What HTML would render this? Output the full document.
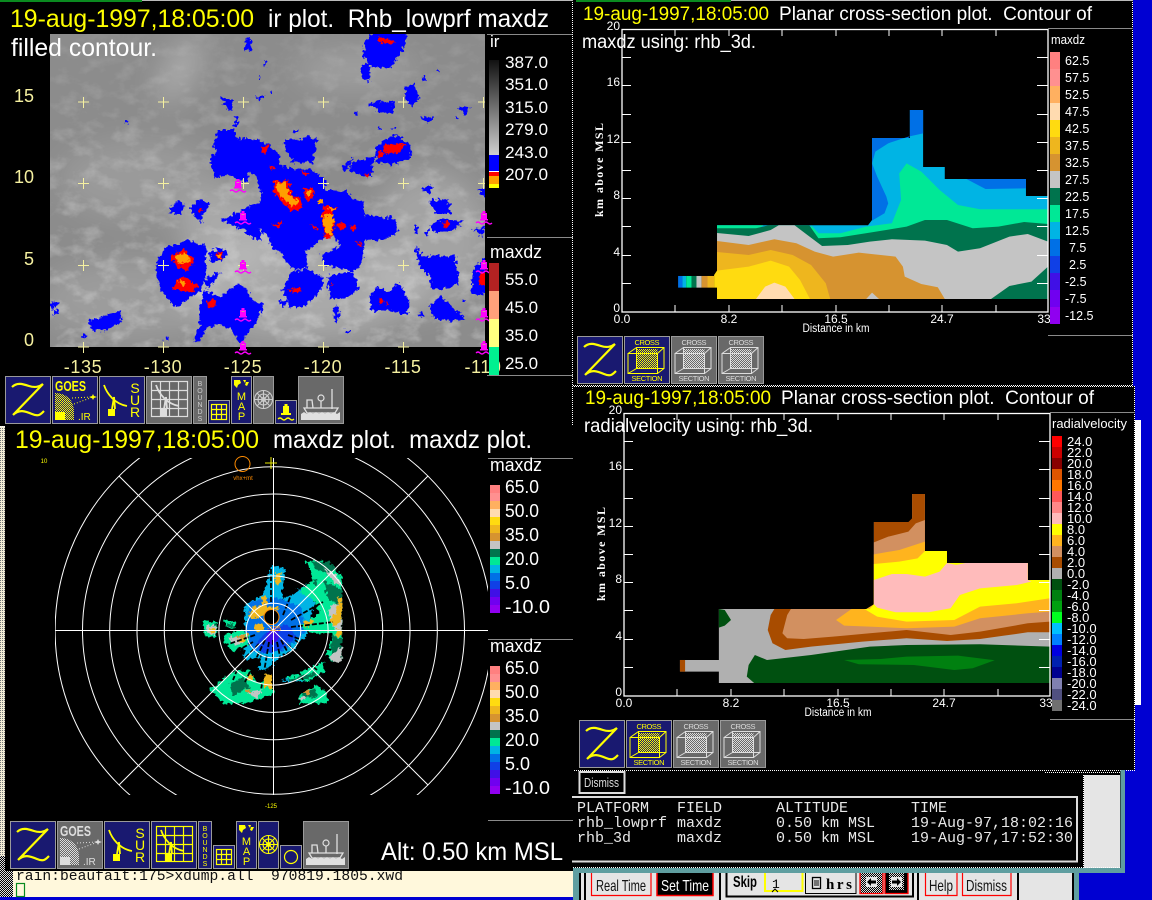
<!DOCTYPE html>
<html><head><meta charset="utf-8"><title>Zebra display</title>
<style>html,body{margin:0;padding:0;background:#000;width:1152px;height:900px;overflow:hidden}svg{display:block}text{font-family:"Liberation Sans",sans-serif;white-space:pre}</style></head>
<body>
<svg width="1152" height="900" viewBox="0 0 1152 900">
<defs>
<pattern id="chk" width="2" height="2" patternUnits="userSpaceOnUse"><rect width="2" height="2" fill="#000"/><rect width="1" height="1" fill="#ddd"/><rect x="1" y="1" width="1" height="1" fill="#ddd"/></pattern>
<pattern id="chkY" width="2" height="2" patternUnits="userSpaceOnUse"><rect width="2" height="2" fill="#191970"/><rect width="1" height="1" fill="#ff0"/><rect x="1" y="1" width="1" height="1" fill="#ff0"/></pattern>
<pattern id="chkW" width="2" height="2" patternUnits="userSpaceOnUse"><rect width="2" height="2" fill="#696969"/><rect width="1" height="1" fill="#ddd"/><rect x="1" y="1" width="1" height="1" fill="#ddd"/></pattern>
<pattern id="pale" width="2" height="2" patternUnits="userSpaceOnUse"><rect width="2" height="2" fill="#f5efd8"/><rect width="1" height="1" fill="#777"/></pattern>
<filter id="cloud" x="0" y="0" width="100%" height="100%"><feTurbulence type="fractalNoise" baseFrequency="0.05 0.07" numOctaves="4" seed="11"/><feColorMatrix values="0 0 0 0 1  0 0 0 0 1  0 0 0 0 1  2 0 0 0 -0.9"/></filter>
<filter id="soft"><feGaussianBlur stdDeviation="14"/></filter>
<filter id="jag" x="-3%" y="-3%" width="106%" height="106%"><feTurbulence type="fractalNoise" baseFrequency=".28" numOctaves="2" seed="4" result="n"/><feDisplacementMap in="SourceGraphic" in2="n" scale="8" xChannelSelector="R" yChannelSelector="G"/></filter>
<filter id="jag2" x="-3%" y="-3%" width="106%" height="106%"><feTurbulence type="fractalNoise" baseFrequency=".3" numOctaves="2" seed="9" result="n"/><feDisplacementMap in="SourceGraphic" in2="n" scale="7" xChannelSelector="R" yChannelSelector="G"/></filter>
<linearGradient id="fade" x1="0" y1="0" x2="0" y2="1"><stop offset="0" stop-color="#fff" stop-opacity=".25"/><stop offset=".45" stop-color="#fff" stop-opacity=".7"/><stop offset="1" stop-color="#fff" stop-opacity="1"/></linearGradient>
<mask id="cloudmask"><rect x="50" y="34" width="435" height="313" fill="url(#fade)"/></mask>
<clipPath id="irclip"><rect x="50" y="34" width="435" height="313"/></clipPath>
<clipPath id="polar"><rect x="55" y="458" width="433" height="337"/></clipPath>
<g id="mzbar"><rect y="0" width="10" height="1" fill="#ff8080"/><rect y="1" width="10" height="1" fill="#ff9090"/><rect y="2" width="10" height="1" fill="#ffb060"/><rect y="3" width="10" height="1" fill="#ffdbb0"/><rect y="4" width="10" height="1" fill="#ffdb10"/><rect y="5" width="10" height="1" fill="#eeb61e"/><rect y="6" width="10" height="1" fill="#d69330"/><rect y="7" width="10" height="1" fill="#c4c4c4"/><rect y="8" width="10" height="1" fill="#00734d"/><rect y="9" width="10" height="1" fill="#00e896"/><rect y="10" width="10" height="1" fill="#00b4e4"/><rect y="11" width="10" height="1" fill="#0070e6"/><rect y="12" width="10" height="1" fill="#1040e6"/><rect y="13" width="10" height="1" fill="#4010e6"/><rect y="14" width="10" height="1" fill="#7000f0"/><rect y="15" width="10" height="1" fill="#9000f0"/></g>
<g id="buoy" fill="#f0f"><rect x="-1.500" y="-9" width="3" height="2"/><rect x="-3" y="-7" width="6" height="6"/><rect x="-1.500" y="-6" width="3" height="1" fill="#d8a"/><rect x="-4" y="-1" width="8" height="1.500"/><path d="M-8 3q2-2 4 0t4 0 4 0 4 0" fill="none" stroke="#f0f" stroke-width="1.300"/></g>
<g id="iZ"><path d="M7 11C12 6 18 8 24 10S34 11 38 8L8 39C14 33 20 35 27 38S36 38 39 35" fill="none" stroke="#ff0" stroke-width="2.200"/></g>
<g id="iDish" fill="none" stroke="currentColor"><path d="M5 9C8 18 16 28 28 30" stroke-width="1.800"/><path d="M15 21L13 33M15 21L16 33" stroke-width="1.800"/><rect x="9" y="33" width="7" height="7" fill="currentColor" stroke="none"/></g>
<g id="iGrid" fill="none" stroke="currentColor" stroke-width="1.200"><rect x="5.500" y="5.500" width="36" height="35"/><path d="M14.500 5.500V40.500M23.500 5.500V40.500M32.500 5.500V40.500M5.500 14.500H41.500M5.500 23.500H41.500M5.500 32.500H41.500"/></g>
<g id="iSmGrid" fill="none" stroke="#ff0" stroke-width="1.200"><rect x="3.500" y="4.500" width="15" height="15"/><path d="M8.500 4.500V19.500M13.500 4.500V19.500M3.500 9.500H18.500M3.500 14.500H18.500"/></g>
<g id="iWheel" fill="none" stroke="currentColor" stroke-width="1.100"><circle cx="10.500" cy="23.500" r="9"/><circle cx="10.500" cy="23.500" r="5.500"/><circle cx="10.500" cy="23.500" r="2"/><path d="M10.500 14V33M1.500 23.500H19.500M4 17L17 30M17 17L4 30"/></g>
<g id="iShip"><path d="M3 38l3-2 3 2 3-2 3 2 3-2 3 2 3-2 3 2 3-2 3 2 3-2 3 2 3-2v8H3z" fill="#e0e0e0"/><path d="M6 32H40L37 37H9Z M9 24H14L15 32H9Z" fill="none" stroke="#e0e0e0" stroke-width="1.300"/><circle cx="23" cy="22" r="3" fill="none" stroke="#e0e0e0" stroke-width="1.200"/><path d="M23 25V32M34 13V33" stroke="#e0e0e0" stroke-width="1.300"/></g>
<g id="iCube" fill="none" stroke="currentColor" stroke-width="1"><rect x="12.500" y="11.500" width="27.500" height="21"/><rect x="4" y="17.500" width="29.500" height="20"/><path d="M4 17.500L12.500 11.500M33.500 17.500L40 11.500M33.500 37.500L40 32.500M4 37.500L12.500 32.500"/></g>
<g id="iMap" fill="#ff0"><path d="M3 4h6l1 3-3 2-1 3-3-3zM12 4h3l-1 3zM15 6h3l-2 4-2-1z"/></g>
</defs>

<!-- backgrounds -->
<rect width="1152" height="900" fill="#000"/>
<rect x="1133" y="0" width="19" height="900" fill="#0000d2"/>
<rect x="1125" y="770" width="27" height="130" fill="#0000d2"/>
<rect x="1079" y="873" width="73" height="27" fill="#0000d2"/>
<rect x="1134.500" y="420" width="6.500" height="285" fill="#fff"/>
<rect x="0" y="0" width="142" height="2" fill="#0a8a20"/><rect x="142" y="0" width="431" height="1" fill="#bbb"/><rect x="576" y="0" width="155" height="2" fill="#0a8a20"/><rect x="731" y="0" width="402" height="1" fill="#bbb"/>

<!-- left strip and terminal -->
<rect x="0" y="426" width="5" height="430" fill="url(#pale)"/>
<rect x="0" y="856" width="13" height="41" fill="url(#chk)"/>
<rect x="13" y="868" width="560" height="29" fill="#fff8dc"/>
<rect x="0" y="897" width="573" height="3" fill="#0000d2"/>
<text x="16" y="880" font-size="15" fill="#111" style="font-family:'Liberation Mono',monospace" textLength="387" lengthAdjust="spacingAndGlyphs">rain:beaufait:175&gt;xdump.all  970819.1805.xwd</text>
<rect x="16.500" y="883.500" width="8" height="13" fill="none" stroke="#0a8a20" stroke-width="1.200"/>

<!-- PANEL 1: IR -->
<g clip-path="url(#irclip)">
<rect x="50" y="34" width="435" height="313" fill="#8c8c8c"/>
<g filter="url(#soft)" fill="#fff">
<ellipse cx="130" cy="300" rx="90" ry="40" opacity=".14"/><ellipse cx="140" cy="180" rx="80" ry="40" opacity=".12"/><ellipse cx="300" cy="290" rx="120" ry="50" opacity=".25"/><ellipse cx="430" cy="240" rx="60" ry="70" opacity=".2"/><ellipse cx="355" cy="70" rx="60" ry="20" opacity=".16"/><ellipse cx="230" cy="230" rx="50" ry="40" opacity=".25"/><ellipse cx="180" cy="70" rx="14" ry="36" opacity=".3" transform="rotate(28 180 70)"/>
</g>
<g mask="url(#cloudmask)"><rect x="50" y="34" width="435" height="313" filter="url(#cloud)" opacity=".38"/></g>
<g filter="url(#jag)">
<path fill="#00f" d="M374 30H408L403 50 390 69 371 66 363 57 365 44ZM365 215L395 218 398 232 382 241 365 240Z"/>
<g fill="#0000ff" transform="translate(150,120) scale(.3333)">
<path d="M205 30L250 30 260 55 320 60 355 72 390 108 390 135 440 150 480 146 525 178 525 212 592 212 605 238 640 242 645 296 660 290 735 297 745 332 685 352 645 362 635 432 612 454 575 448 520 434 515 405 570 378 555 352 525 348 500 372 465 395 475 442 440 450 412 432 392 398 372 392 352 348 325 322 340 362 308 358 288 334 242 314 215 302 262 278 288 262 328 252 335 230 322 172 300 152 290 188 230 164 195 175 180 122 200 90 190 82Z"/>
<path d="M22 420L48 382 110 362 168 378 168 450 152 512 100 548 75 562 32 512 17 460Z"/>
<path d="M62 265L80 243 107 253 92 282 62 282ZM118 265L150 238 180 253 157 287 157 307 138 297Z"/>
<path d="M178 395L215 383 232 400 217 422 183 427Z"/>
<path d="M148 560L163 507 210 532 240 507 265 492 292 507 302 542 342 552 317 612 292 642 270 672 248 632 210 612 170 622 150 662 128 667 148 620Z"/>
<path d="M398 510L423 458 470 447 522 472 512 512 470 558 418 562Z"/>
<path d="M533 470L570 458 612 458 627 505 592 532 538 537Z"/>
<path d="M658 530L680 503 720 513 745 487 777 540 772 587 720 572 663 572Z"/>
<path d="M678 80L730 42 782 73 782 112 740 132 678 127Z"/>
<path d="M398 60L440 58 482 48 492 85 472 127 428 127Z"/>
<path d="M640 150L672 133 660 172ZM573 140L612 113 590 152ZM158 480L212 453 190 492 170 502ZM388 540L412 543 400 562ZM548 590L572 578 560 612Z"/>
</g>
<g fill="#0000ff" transform="scale(.3673,.3333)">
<path d="M983 200L1007 188 1007 237 988 237ZM1103 265L1125 248 1142 290 1122 322 1103 302ZM1003 310L1040 303 1072 308 1072 342 1030 332ZM1248 320L1282 323 1265 347ZM1143 350L1182 353 1165 370ZM668 116L684 116 684 152 668 152ZM698 288L720 288 705 307ZM598 288L632 298 634 337 618 327Z"/>
<path d="M1128 735L1150 768 1190 768 1242 768 1247 852 1200 872 1173 862 1173 832 1143 802ZM1168 920L1200 888 1237 928 1267 957 1220 962 1178 952Z"/>
<path d="M1170 680L1200 658 1262 663 1232 692 1188 697ZM1168 600L1222 598 1227 642 1188 642ZM1148 565L1182 558 1165 582Z"/>
<path d="M1288 810L1325 768 1325 882 1283 882ZM238 965L327 930 330 967 287 992 253 992ZM138 905L162 908 145 927ZM143 930L162 933 148 947ZM1298 570L1325 563 1325 592ZM788 430L862 418 852 492 788 472ZM958 490L1022 468 1002 532 948 512ZM1288 690L1325 678 1310 707Z"/>
<path d="M720 180h6v22h-6zM704 232h6v6h-6zM965 335h8v8h-8zM1030 380h6v10h-6zM640 350h8v30h-8zM1000 240h8v8h-8zM1190 210h6v6h-6zM1150 230h8v12h-8zM1240 350h6v6h-6zM735 270h8v12h-8zM340 365h10v8h-10zM910 920h12v40h-12zM940 990h14v8h-14zM1140 940h14v10h-14zM225 1000h10v12h-10zM450 1010h10v10h-10zM880 680h10v10h-10zM1130 680h8v20h-8zM1160 690h6v16h-6zM1260 900h6v6h-6zM800 390h10v10h-10zM1070 380h8v8h-8z"/>
</g>
</g>
<g filter="url(#jag2)">
<path fill="#f00" d="M378 36L396 42 388 44 378 42Z"/>
<g fill="#f00" transform="translate(150,120) scale(.3333)">
<path d="M370 185L415 180 425 225 455 235 455 265 425 275 390 240 370 215Z"/><path d="M460 205L490 205 490 235 470 245Z"/><path d="M520 255L565 265 545 280 555 310 545 350 525 355 515 300Z"/>
<path d="M560 320L575 305 590 320 575 330ZM600 315L620 320 610 335ZM615 360L640 375 630 380ZM480 310L505 325 495 330ZM365 315L400 305 385 325ZM330 85L358 72 345 105ZM358 135L385 145 365 147ZM450 155L480 160 465 170Z"/>
<path d="M60 410L100 385 125 410 135 430 110 450 80 440Z"/><path d="M65 510L80 480 105 470 145 500 125 515 85 510Z"/><path d="M198 400L218 395 215 415 200 415Z"/><path d="M172 545L190 533 200 555 190 568 175 562Z"/>
<path d="M145 265L160 270 150 280ZM415 510L450 505 455 510 430 520ZM688 535L702 545 690 552ZM710 545L717 555 708 557ZM680 95L700 90 700 110 685 112ZM700 75L770 70 745 100 705 100ZM640 160L660 158 650 172ZM540 490L550 490 545 497Z"/>
</g>
<g fill="#f00" transform="scale(.3673,.3333)"><path d="M1305 820L1325 815 1325 855 1305 855ZM1205 668L1225 665 1215 685Z"/></g>
<g fill="#ffa000" transform="translate(150,120) scale(.3333)">
<path d="M375 190L405 185 420 225 445 240 445 255 430 260 395 235Z"/><path d="M465 210L485 215 475 232Z"/><path d="M505 240L520 235 520 250 505 255Z"/><path d="M518 285L550 285 545 345 530 345 520 315Z"/><path d="M75 405L115 400 120 425 85 430Z"/><path d="M85 480L105 485 100 505Z"/><path d="M202 403L213 400 212 412 203 412Z"/><path d="M535 260L560 265 545 275Z"/>
</g>
</g>
</g>
<g stroke="#f5f0a0" stroke-width="1" fill="none">
<path d="M78 102h11M83.500 97v11M158 102h11M163.500 97v11M238 102h11M243.500 97v11M318 102h11M323.500 97v11M398 102h11M403.500 97v11M478 102h7M483.500 97v11"/>
<path d="M78 183.500h11M83.500 178v11M158 183.500h11M163.500 178v11M238 183.500h11M243.500 178v11M318 183.500h11M323.500 178v11M398 183.500h11M403.500 178v11M478 183.500h7M483.500 178v11"/>
<path d="M78 265.500h11M83.500 260v11M158 265.500h11M163.500 260v11M238 265.500h11M243.500 260v11M318 265.500h11M323.500 260v11M398 265.500h11M403.500 260v11"/>
<path d="M78 347h11M83.500 342v11M158 347h11M163.500 342v11M318 347h11M323.500 342v11M398 347h11M403.500 342v11"/>
</g>
<use href="#buoy" x="238" y="188"/><use href="#buoy" x="243" y="220"/><use href="#buoy" x="243" y="269"/><use href="#buoy" x="243" y="317"/><use href="#buoy" x="243" y="350"/><use href="#buoy" x="484" y="220"/><use href="#buoy" x="484" y="269"/><use href="#buoy" x="484" y="317"/><use href="#buoy" x="484" y="350"/>
<text x="10" y="27" font-size="25" fill="#ff0" textLength="244" lengthAdjust="spacingAndGlyphs">19-aug-1997,18:05:00</text>
<text x="268" y="27" font-size="25" fill="#fff" textLength="281" lengthAdjust="spacingAndGlyphs">ir plot.  Rhb_lowprf maxdz</text>
<text x="11" y="56" font-size="25" fill="#fff" textLength="146" lengthAdjust="spacingAndGlyphs">filled contour.</text>
<g font-size="18" fill="#f5f0a0" text-anchor="end"><text x="34" y="102">15</text><text x="34" y="183">10</text><text x="34" y="265">5</text><text x="34" y="346">0</text></g>
<g font-size="18" fill="#f5f0a0" text-anchor="middle" letter-spacing=".6"><text x="83" y="373">-135</text><text x="163" y="373">-130</text><text x="243" y="373">-125</text><text x="323" y="373">-120</text><text x="403" y="373">-115</text><text x="483" y="373">-110</text></g>
<path d="M487 34.500H573M487 237.500H573M487 375.500H573" stroke="#8a8a8a"/>
<defs><linearGradient id="irg" x1="0" y1="0" x2="0" y2="1"><stop offset="0" stop-color="#111"/><stop offset="1" stop-color="#cfcfcf"/></linearGradient></defs>
<rect x="489" y="60" width="10" height="95" fill="url(#irg)"/><rect x="489" y="155" width="10" height="16" fill="#00f"/><rect x="489" y="171" width="10" height="1" fill="#fff"/><rect x="489" y="172" width="10" height="4" fill="#f00"/><rect x="489" y="176" width="10" height="8" fill="#ffa000"/><rect x="489" y="184" width="10" height="4" fill="#ff0"/>
<g font-size="17" fill="#fff"><text x="490" y="47">ir</text><text x="505" y="68" textLength="43" lengthAdjust="spacingAndGlyphs">387.0</text><text x="505" y="90" textLength="43" lengthAdjust="spacingAndGlyphs">351.0</text><text x="505" y="113" textLength="43" lengthAdjust="spacingAndGlyphs">315.0</text><text x="505" y="135" textLength="43" lengthAdjust="spacingAndGlyphs">279.0</text><text x="505" y="158" textLength="43" lengthAdjust="spacingAndGlyphs">243.0</text><text x="505" y="180" textLength="43" lengthAdjust="spacingAndGlyphs">207.0</text>
<text x="490" y="258" textLength="52" lengthAdjust="spacingAndGlyphs" font-size="18">maxdz</text><text x="505" y="285" textLength="33" lengthAdjust="spacingAndGlyphs">55.0</text><text x="505" y="313" textLength="33" lengthAdjust="spacingAndGlyphs">45.0</text><text x="505" y="341" textLength="33" lengthAdjust="spacingAndGlyphs">35.0</text></g>
<rect x="489" y="263" width="10" height="28" fill="#b22222"/><rect x="489" y="291" width="10" height="28" fill="#ffa07a"/><rect x="489" y="319" width="10" height="28" fill="#ffff80"/><rect x="489" y="347" width="10" height="28" fill="#00f090"/>
<text x="505" y="369" font-size="17" fill="#fff" textLength="33" lengthAdjust="spacingAndGlyphs">25.0</text>

<!-- Toolbar 1 -->
<g stroke="#9a9a9a" stroke-width="1">
<rect x="5.500" y="376.500" width="45" height="47" fill="#191970"/><rect x="52.500" y="376.500" width="45" height="47" fill="#191970"/><rect x="99.500" y="376.500" width="45" height="47" fill="#191970"/><rect x="146.500" y="376.500" width="45" height="47" fill="#696969"/><rect x="193.500" y="376.500" width="13" height="47" fill="#696969"/><rect x="208.500" y="400.500" width="21" height="23" fill="#191970"/><rect x="231.500" y="376.500" width="20" height="47" fill="#191970"/><rect x="253.500" y="376.500" width="20" height="47" fill="#696969"/><rect x="275.500" y="400.500" width="21" height="23" fill="#191970"/><rect x="298.500" y="376.500" width="45" height="47" fill="#696969"/>
</g>
<use href="#iZ" x="5" y="376"/>
<g transform="translate(52,376)"><text x="3" y="15" font-size="15" font-weight="bold" fill="#ff0" textLength="31" lengthAdjust="spacingAndGlyphs">GOES</text><path d="M3 17C14 17 22 24 22 36V44H3Z" fill="url(#chkY)"/><rect x="3" y="36" width="10" height="8" fill="#ff0"/><path d="M22 28L41 21M20 22L41 21" stroke="#ff0" stroke-dasharray="1 2" fill="none"/><path d="M41 18l1 2 3 1-3 1-1 2-1-2-3-1 3-1z" fill="#ff0"/><text x="26" y="44" font-size="10" fill="#ff0">.IR</text></g>
<g transform="translate(99,376)" color="#ff0"><use href="#iDish"/><g font-size="14" fill="#ff0" text-anchor="middle"><text x="36" y="17">S</text><text x="36" y="29">U</text><text x="36" y="41">R</text></g></g>
<g transform="translate(146,376)" color="#ddd"><use href="#iGrid"/><use href="#iDish" x="5"/></g>
<g transform="translate(193,376)" font-size="7" fill="#ccc" text-anchor="middle"><text x="7" y="10">B</text><text x="7" y="17">O</text><text x="7" y="24">U</text><text x="7" y="31">N</text><text x="7" y="38">D</text><text x="7" y="45">S</text></g>
<use href="#iSmGrid" x="208" y="400"/>
<g transform="translate(231,376)"><use href="#iMap"/><g font-size="11" fill="#ff0" text-anchor="middle"><text x="10.500" y="24">M</text><text x="10.500" y="34">A</text><text x="10.500" y="44">P</text></g></g>
<use href="#iWheel" x="253" y="376" color="#ccc"/>
<g transform="translate(286,416)" fill="#ff0"><rect x="-1.500" y="-12" width="3" height="2"/><rect x="-3" y="-10" width="6" height="7"/><rect x="-5" y="-3" width="10" height="2"/><path d="M-8 3q2-2 4 0t4 0 4 0 4 0" fill="none" stroke="#ff0" stroke-width="1.300"/></g>
<use href="#iShip" x="298" y="376"/>

<!-- dotted panel edges -->
<path d="M0 426.500H573M572.500 2V870M573 385.500H1133M1132.500 2V385" stroke="#fff" stroke-dasharray="1 1" fill="none"/>

<!-- PANEL 2 -->
<g transform="translate(576,0) scale(.3673,.3333)">
<path fill="#00b4e4" d="M384 897V676H795L806 660V414H909V330H945V501H1004V537H1225V588H1285V897Z"/>
<path fill="#0070e6" d="M806 414H905L909 408V330H945V400L905 410 850 430 815 455 806 490 820 530 845 590 850 610 840 640 806 662ZM1063 537H1225V565L1115 567Z"/>
<path fill="#00e896" d="M640 676L660 700 720 700 790 680 860 670 885 600 880 520 900 490 940 515 990 570 1040 615 1100 628H1285V720H640ZM384 676H510L490 690H384Z"/>
<path fill="#00734d" d="M384 685L490 685 525 676H635L660 715 720 712 800 698 900 680 950 660 1010 660 1080 685 1150 680 1220 666 1285 672V897H384Z"/>
<path fill="#c4c4c4" d="M384 699L470 708 530 690 552 676H595L630 705 670 738 740 735 800 725 860 718 950 722 1010 735 1040 755 1100 745 1180 710 1230 702 1285 725V800L1240 845 1180 858 1130 897H384Z"/>
<path fill="#d69330" d="M384 723L470 735 540 718 600 730 650 755 700 770 770 758 870 770 890 800 895 830 940 852 985 862 1004 897H825L806 878 790 897H384Z"/>
<path fill="#eeb61e" d="M384 756L470 765 530 750 590 765 640 795 680 850 692 897H384Z"/>
<path fill="#ffdb10" d="M376 825L384 812 470 800 530 782 580 800 610 840 637 897H384V863H376Z"/>
<path fill="#ffdbb0" d="M490 897L515 860 540 848 570 860 595 897Z"/>
<rect x="278" y="828" width="12" height="35" fill="#0070e6"/><rect x="290" y="828" width="10" height="35" fill="#00b4e4"/><rect x="300" y="828" width="15" height="35" fill="#00e896"/><rect x="315" y="828" width="13" height="35" fill="#00734d"/><rect x="328" y="828" width="14" height="35" fill="#c4c4c4"/><rect x="342" y="828" width="16" height="35" fill="#d69330"/><rect x="358" y="828" width="18" height="35" fill="#eeb61e"/>
</g>
<g id="axes">
<rect x="622" y="29.500" width="426" height="282.500" fill="none" stroke="#fff" stroke-width="1.300"/>
<path d="M675 312v-7M729 312v-7M782 312v-7M836 312v-7M889 312v-7M942 312v-7M996 312v-7M675 29v7M729 29v7M782 29v7M836 29v7M889 29v7M942 29v7M996 29v7M622 57.500h9M622 85.500h9M622 114.500h9M622 142.500h9M622 170.500h9M622 198.500h9M622 226.500h9M622 255.500h9M622 283.500h9M1048 57.500h-11M1048 85.500h-11M1048 114.500h-11M1048 142.500h-11M1048 170.500h-11M1048 198.500h-11M1048 226.500h-11M1048 255.500h-11M1048 283.500h-11" stroke="#fff" stroke-width="1" fill="none"/>
<g font-size="12" fill="#fff" text-anchor="end"><text x="620" y="30">20</text><text x="620" y="86">16</text><text x="620" y="143">12</text><text x="620" y="199">8</text><text x="620" y="256">4</text><text x="620" y="312">0</text></g>
<g font-size="12" fill="#fff" text-anchor="middle"><text x="622" y="323">0.0</text><text x="729" y="323">8.2</text><text x="836" y="323">16.5</text><text x="942" y="323">24.7</text><text x="1044" y="323">33</text></g>
<text x="836" y="332" font-size="11.500" fill="#fff" text-anchor="middle" textLength="67" lengthAdjust="spacingAndGlyphs">Distance in km</text>
<text transform="translate(603,217) rotate(-90)" font-size="12" font-weight="bold" fill="#fff" style="font-family:'Liberation Serif',serif" textLength="94" lengthAdjust="spacing">km above MSL</text>
</g>
<text x="583" y="20" font-size="19" fill="#ff0" textLength="186" lengthAdjust="spacingAndGlyphs">19-aug-1997,18:05:00</text>
<text x="779" y="20" font-size="19" fill="#fff" textLength="313" lengthAdjust="spacingAndGlyphs">Planar cross-section plot.  Contour of</text>
<text x="582" y="48" font-size="19" fill="#fff" textLength="174" lengthAdjust="spacingAndGlyphs">maxdz using: rhb_3d.</text>
<path d="M1048 28.500H1133M1048 335.500H1133" stroke="#8a8a8a"/>
<use href="#mzbar" transform="translate(1050,52) scale(1,17)"/>
<g font-size="12.500" fill="#fff"><text x="1051" y="44" textLength="34" lengthAdjust="spacingAndGlyphs">maxdz</text><text x="1065" y="65">62.5</text><text x="1065" y="82">57.5</text><text x="1065" y="99">52.5</text><text x="1065" y="116">47.5</text><text x="1065" y="133">42.5</text><text x="1065" y="150">37.5</text><text x="1065" y="167">32.5</text><text x="1065" y="184">27.5</text><text x="1065" y="201">22.5</text><text x="1065" y="218">17.5</text><text x="1065" y="235">12.5</text><text x="1069" y="252">7.5</text><text x="1069" y="269">2.5</text><text x="1065" y="286">-2.5</text><text x="1065" y="303">-7.5</text><text x="1065" y="320">-12.5</text></g>
<!-- toolbar 2 -->
<g id="tb2">
<g stroke="#9a9a9a"><rect x="577.500" y="336.500" width="45" height="47" fill="#191970"/><rect x="624.500" y="336.500" width="45" height="47" fill="#191970"/><rect x="671.500" y="336.500" width="45" height="47" fill="#696969"/><rect x="718.500" y="336.500" width="45" height="47" fill="#696969"/></g>
<use href="#iZ" x="577" y="336"/>
<g transform="translate(624,336)" color="#ff0"><rect x="12.500" y="13" width="21" height="19" fill="url(#chkY)"/><use href="#iCube"/><text x="23" y="9" font-size="7.500" fill="#ff0" text-anchor="middle" textLength="25" lengthAdjust="spacing">CROSS</text><text x="23" y="45" font-size="7.500" fill="#ff0" text-anchor="middle" textLength="31" lengthAdjust="spacing">SECTION</text></g>
<g transform="translate(671,336)" color="#ddd"><rect x="12.500" y="13" width="21" height="19" fill="url(#chkW)"/><use href="#iCube"/><text x="23" y="9" font-size="7.500" fill="#ddd" text-anchor="middle" textLength="25" lengthAdjust="spacing">CROSS</text><text x="23" y="45" font-size="7.500" fill="#ddd" text-anchor="middle" textLength="31" lengthAdjust="spacing">SECTION</text></g>
<g transform="translate(718,336)" color="#ddd"><rect x="12.500" y="13" width="21" height="19" fill="url(#chkW)"/><use href="#iCube"/><text x="23" y="9" font-size="7.500" fill="#ddd" text-anchor="middle" textLength="25" lengthAdjust="spacing">CROSS</text><text x="23" y="45" font-size="7.500" fill="#ddd" text-anchor="middle" textLength="31" lengthAdjust="spacing">SECTION</text></g>
</g>

<!-- PANEL 3 -->
<rect x="574" y="386" width="561" height="384" fill="#000"/>
<path d="M574 386.500H1135M1134.500 386V770M574 770.500H1135" stroke="#fff" stroke-dasharray="1 1" fill="none"/>
<g transform="translate(576,385) scale(.3673,.3333)">
<path fill="#b0b0b0" d="M389 894V672H800L811 658V411H915V327H950V498H1010V534H1230V585H1290V894ZM283 825H389V860H283Z"/>
<path fill="#a84c00" d="M522 735L530 690 540 672H800L811 658V411H905L915 400V327H950V498H1010V534H1230V585H1290V742L1230 742 1100 762 1010 768 900 760 780 770 640 785 570 795 535 775Z"/>
<path fill="#d29060" d="M562 745L575 690 585 672H800L811 658V472L850 455 905 440 925 415 950 405V498H1010V534H1230V585H1290V710L1230 715 1100 740 1020 750 900 735 800 745 700 755 620 762 575 760Z"/>
<path fill="#ffb41e" d="M708 705L750 672H790L811 658V508L880 495 950 470V498H1010V534H1230V585H1290V680L1230 685 1100 700 1030 725 900 730 800 725 730 722Z"/>
<path fill="#ff0" d="M785 672H800L811 658V537L880 530 930 520 950 498H1010V534H1230V585H1290V640L1200 655 1100 665 1030 705 900 710 820 695Z"/>
<path fill="#ffbbbb" d="M811 658V585L860 567 900 567 950 575 990 560 1010 534 1035 540 1060 534H1230V585L1240 590 1200 600 1100 610 1045 630 1020 670 960 682 870 682 820 668Z"/>
<path fill="#005010" d="M487 810L520 825 640 810 800 785 900 780 1100 778 1290 785V894H485L465 875 470 840Z"/>
<path fill="#008010" d="M730 825L830 822 900 815 1040 812 1140 826 1080 850 1030 855 920 840 770 838Z"/>
<path fill="#005010" d="M389 672L405 675 422 705 405 722 389 728Z"/>
<rect x="283" y="825" width="14" height="35" fill="#a84c00"/>
</g>
<use href="#axes" x="2" y="384"/>
<text x="585" y="404" font-size="19" fill="#ff0" textLength="186" lengthAdjust="spacingAndGlyphs">19-aug-1997,18:05:00</text>
<text x="781" y="404" font-size="19" fill="#fff" textLength="313" lengthAdjust="spacingAndGlyphs">Planar cross-section plot.  Contour of</text>
<text x="584" y="432" font-size="19" fill="#fff" textLength="229" lengthAdjust="spacingAndGlyphs">radialvelocity using: rhb_3d.</text>
<path d="M1050 412.500H1135M1050 719.500H1135" stroke="#8a8a8a"/>
<text x="1052" y="428" font-size="12.500" fill="#fff" textLength="75" lengthAdjust="spacingAndGlyphs">radialvelocity</text>
<g>
<rect x="1052" y="436" width="10" height="11" fill="#f00"/><rect x="1052" y="447" width="10" height="11" fill="#c00"/><rect x="1052" y="458" width="10" height="11" fill="#800"/><rect x="1052" y="469" width="10" height="11" fill="#d50"/><rect x="1052" y="480" width="10" height="11" fill="#ff7700"/><rect x="1052" y="491" width="10" height="11" fill="#ff5858"/><rect x="1052" y="502" width="10" height="11" fill="#ff8888"/><rect x="1052" y="513" width="10" height="11" fill="#ffbbbb"/><rect x="1052" y="524" width="10" height="11" fill="#ff0"/><rect x="1052" y="535" width="10" height="11" fill="#ffb41e"/><rect x="1052" y="546" width="10" height="11" fill="#d29060"/><rect x="1052" y="557" width="10" height="11" fill="#a84c00"/><rect x="1052" y="568" width="10" height="11" fill="#b0b0b0"/><rect x="1052" y="579" width="10" height="11" fill="#005010"/><rect x="1052" y="590" width="10" height="11" fill="#008010"/><rect x="1052" y="601" width="10" height="11" fill="#00a010"/><rect x="1052" y="612" width="10" height="11" fill="#00ff20"/><rect x="1052" y="623" width="10" height="11" fill="#00c0ff"/><rect x="1052" y="634" width="10" height="11" fill="#0080ff"/><rect x="1052" y="645" width="10" height="11" fill="#0000e0"/><rect x="1052" y="656" width="10" height="11" fill="#0020b0"/><rect x="1052" y="667" width="10" height="11" fill="#000090"/><rect x="1052" y="678" width="10" height="11" fill="#8080b0"/><rect x="1052" y="689" width="10" height="11" fill="#505080"/><rect x="1052" y="700" width="10" height="11" fill="#707070"/>
</g>
<g font-size="13" fill="#fff"><text x="1067" y="446">24.0</text><text x="1067" y="457">22.0</text><text x="1067" y="468">20.0</text><text x="1067" y="479">18.0</text><text x="1067" y="490">16.0</text><text x="1067" y="501">14.0</text><text x="1067" y="512">12.0</text><text x="1067" y="523">10.0</text><text x="1067" y="534">8.0</text><text x="1067" y="545">6.0</text><text x="1067" y="556">4.0</text><text x="1067" y="567">2.0</text><text x="1067" y="578">0.0</text><text x="1067" y="589">-2.0</text><text x="1067" y="600">-4.0</text><text x="1067" y="611">-6.0</text><text x="1067" y="622">-8.0</text><text x="1067" y="633">-10.0</text><text x="1067" y="644">-12.0</text><text x="1067" y="655">-14.0</text><text x="1067" y="666">-16.0</text><text x="1067" y="677">-18.0</text><text x="1067" y="688">-20.0</text><text x="1067" y="699">-22.0</text><text x="1067" y="710">-24.0</text></g>
<use href="#tb2" x="2" y="384"/>

<!-- PANEL 4: radar -->
<rect x="5" y="426" width="568" height="445" fill="#000"/>
<g filter="url(#jag2)"><g transform="translate(200,540) scale(.3333)">
<path fill="#00b4e4" d="M135 195L190 165 215 75 255 85 245 180 295 150 345 120 360 130 340 200 320 290 290 310 285 330 240 350 215 380 175 395 185 350 130 360 135 300ZM245 420L310 395 370 365 375 395 320 425 260 425Z"/>
<path fill="#0070e6" d="M150 190L200 170 240 175 300 200 320 270 290 300 250 330 200 340 160 330 135 300Z"/>
<path fill="#1040e6" d="M190 280L260 250 290 290 240 330 185 340 170 310Z"/>
<path fill="#4010e6" d="M205 270L235 270 235 300 215 315 200 300Z"/>
<path fill="#00e896" d="M315 65L365 62 425 105V360L395 365 380 340 400 280 340 280 300 260 360 220 340 180 295 155 340 120 330 90Z"/>
<path fill="#00734d" d="M335 65H390L410 90 385 100 350 90ZM370 120L425 150V200L385 180ZM395 280L425 300V365H395ZM335 120L355 115 350 140Z"/>
<path fill="#c4c4c4" d="M375 85L415 110 420 140 395 120ZM395 195L415 190 425 170V280L395 260 385 215ZM390 350L425 320V365H400Z"/>
<path fill="#eeb61e" d="M415 170H425V240L400 260 390 235 410 215ZM310 245L340 240 335 255 315 260ZM410 270H425V290H410Z"/>
<path fill="#00e896" d="M70 285L130 270 150 290 140 320 100 335 75 310ZM10 245H50V290H15ZM75 240L110 245 105 265 75 260ZM30 450L100 395 150 390 170 430 215 415 220 460 140 490 70 490ZM295 470L345 435 380 455 385 490 300 490ZM255 415L310 395 370 365 375 395 320 425Z"/>
<path fill="#00734d" d="M90 430L130 410 150 440 100 470ZM260 420L310 405 345 395 340 410 280 425ZM80 250L100 248 100 260 80 260ZM310 460L345 445 350 470 310 475Z"/>
<path fill="#c4c4c4" d="M85 295L135 280 130 310 105 315ZM140 460L190 450 170 475ZM20 258L48 258 45 285 20 280ZM295 470L320 470 305 482Z"/>
<path fill="#d69330" d="M100 290L145 280 130 300ZM305 455L335 450 325 465ZM135 450L150 445 150 460Z"/>
<path fill="#eeb61e" d="M155 200L190 195 240 205 215 215 170 235 145 235ZM165 255L190 252 190 275 165 275ZM195 405H215L218 450 195 440ZM140 405H160V420H140ZM225 100H245L240 130 225 130ZM185 170H200V195H185ZM25 265H48L40 280ZM120 298L135 295 135 305 120 305Z"/>
</g></g>
<g transform="translate(273,630)" stroke="#000" stroke-width="1.800" stroke-dasharray="5 2" fill="none">
<path d="M0 10V60M8 10L30 50M-8 10L-28 52M15 5L58 20M18 -3L60 -8M-18 5L-50 16M14 14L44 40M-14 14L-42 42M-4 12L-12 60M4 12L14 60M22 10L48 30M-20 12L-52 30M18 -10L50 -28M10 -15L24 -50M-2 -28V-70M-28 20L-40 50"/>
</g>
<circle cx="271.500" cy="617" r="7.500" fill="#000" stroke="#ff8c00" stroke-width="1"/>
<g clip-path="url(#polar)" fill="none" stroke="#fff" stroke-width="1">
<circle cx="273.500" cy="630.500" r="27.300"/><circle cx="273.500" cy="630.500" r="54.600"/><circle cx="273.500" cy="630.500" r="81.900"/><circle cx="273.500" cy="630.500" r="109.200"/><circle cx="273.500" cy="630.500" r="136.500"/><circle cx="273.500" cy="630.500" r="163.800"/><circle cx="273.500" cy="630.500" r="191"/><circle cx="273.500" cy="630.500" r="218.400"/>
<path d="M55 630.500H488M273.500 458V795M119 476L428 785M428 476L119 785"/>
</g>
<path d="M265 463h12M271 457v12" stroke="#ff0" opacity=".9"/>
<circle cx="242.500" cy="464" r="7.500" fill="none" stroke="#ff8c00"/>
<text x="243" y="480" font-size="6" fill="#ff8c00" text-anchor="middle">vhx+mt</text>
<text x="44" y="463" font-size="6" fill="#ff0" text-anchor="middle">10</text>
<text x="271" y="808" font-size="6" fill="#ff0" text-anchor="middle">-125</text>
<text x="274" y="631" font-size="7" fill="#ff8c00" text-anchor="middle">-125</text>
<text x="15" y="448" font-size="25" fill="#ff0" textLength="244" lengthAdjust="spacingAndGlyphs">19-aug-1997,18:05:00</text>
<text x="273" y="448" font-size="25" fill="#fff" textLength="259" lengthAdjust="spacingAndGlyphs">maxdz plot.  maxdz plot.</text>
<path d="M488 458.500H573M488 639.500H573M488 820.500H573" stroke="#8a8a8a"/>
<use href="#mzbar" transform="translate(490,485) scale(1,8)"/>
<use href="#mzbar" transform="translate(490,666) scale(1,8)"/>
<g font-size="18" fill="#fff"><text x="490" y="471" textLength="52" lengthAdjust="spacingAndGlyphs">maxdz</text><text x="505" y="493" textLength="34" lengthAdjust="spacingAndGlyphs">65.0</text><text x="505" y="517" textLength="34" lengthAdjust="spacingAndGlyphs">50.0</text><text x="505" y="541" textLength="34" lengthAdjust="spacingAndGlyphs">35.0</text><text x="505" y="565" textLength="34" lengthAdjust="spacingAndGlyphs">20.0</text><text x="505" y="589" textLength="25" lengthAdjust="spacingAndGlyphs">5.0</text><text x="505" y="613" textLength="45" lengthAdjust="spacingAndGlyphs">-10.0</text>
<text x="490" y="652" textLength="52" lengthAdjust="spacingAndGlyphs">maxdz</text><text x="505" y="674" textLength="34" lengthAdjust="spacingAndGlyphs">65.0</text><text x="505" y="698" textLength="34" lengthAdjust="spacingAndGlyphs">50.0</text><text x="505" y="722" textLength="34" lengthAdjust="spacingAndGlyphs">35.0</text><text x="505" y="746" textLength="34" lengthAdjust="spacingAndGlyphs">20.0</text><text x="505" y="770" textLength="25" lengthAdjust="spacingAndGlyphs">5.0</text><text x="505" y="794" textLength="45" lengthAdjust="spacingAndGlyphs">-10.0</text></g>
<text x="381" y="860" font-size="25" fill="#fff" textLength="182" lengthAdjust="spacingAndGlyphs">Alt: 0.50 km MSL</text>

<!-- Toolbar 4 -->
<g stroke="#9a9a9a">
<rect x="10.500" y="821.500" width="45" height="47" fill="#191970"/><rect x="57.500" y="821.500" width="45" height="47" fill="#696969"/><rect x="104.500" y="821.500" width="45" height="47" fill="#191970"/><rect x="151.500" y="821.500" width="45" height="47" fill="#191970"/><rect x="198.500" y="821.500" width="13" height="47" fill="#191970"/><rect x="213.500" y="845.500" width="21" height="23" fill="#191970"/><rect x="236.500" y="821.500" width="20" height="47" fill="#191970"/><rect x="258.500" y="821.500" width="20" height="47" fill="#191970"/><rect x="280.500" y="845.500" width="21" height="23" fill="#191970"/><rect x="303.500" y="821.500" width="45" height="47" fill="#696969"/>
</g>
<use href="#iZ" x="10" y="821"/>
<g transform="translate(57,821)"><text x="3" y="15" font-size="15" font-weight="bold" fill="#ddd" textLength="31" lengthAdjust="spacingAndGlyphs">GOES</text><path d="M3 17C14 17 22 24 22 36V44H3Z" fill="url(#chkW)"/><rect x="3" y="36" width="10" height="8" fill="#ddd"/><path d="M22 28L41 21M20 22L41 21" stroke="#ddd" stroke-dasharray="1 2" fill="none"/><path d="M41 18l1 2 3 1-3 1-1 2-1-2-3-1 3-1z" fill="#ddd"/><text x="26" y="44" font-size="10" fill="#ddd">.IR</text></g>
<g transform="translate(104,821)" color="#ff0"><use href="#iDish"/><g font-size="14" fill="#ff0" text-anchor="middle"><text x="36" y="17">S</text><text x="36" y="29">U</text><text x="36" y="41">R</text></g></g>
<g transform="translate(151,821)" color="#ff0"><use href="#iGrid"/><use href="#iDish" x="5"/></g>
<g transform="translate(198,821)" font-size="7" fill="#ff0" text-anchor="middle"><text x="7" y="10">B</text><text x="7" y="17">O</text><text x="7" y="24">U</text><text x="7" y="31">N</text><text x="7" y="38">D</text><text x="7" y="45">S</text></g>
<use href="#iSmGrid" x="213" y="845"/>
<g transform="translate(236,821)"><use href="#iMap"/><g font-size="11" fill="#ff0" text-anchor="middle"><text x="10.500" y="24">M</text><text x="10.500" y="34">A</text><text x="10.500" y="44">P</text></g></g>
<use href="#iWheel" x="258" y="821" color="#ff0"/>
<circle cx="291" cy="857" r="6.500" fill="none" stroke="#ff0" stroke-width="1.200"/>
<use href="#iShip" x="303" y="821"/>

<!-- info dialog -->
<rect x="573" y="771" width="548" height="97" fill="#000"/>
<rect x="1084" y="775" width="36" height="93" fill="#e5e5e5"/>
<path d="M1045 772.500H1120M1083.500 775V868" stroke="#fff" stroke-dasharray="1 1" fill="none"/>
<rect x="573" y="868" width="552" height="5" fill="#5f9ea0"/><rect x="1120.500" y="770" width="4.500" height="103" fill="#5f9ea0"/>
<path d="M573 867.500H1120" stroke="#fff" stroke-dasharray="1 1"/>
<rect x="579.500" y="772" width="45" height="21" fill="#000" stroke="#ddd" stroke-width="2"/>
<text x="584" y="787" font-size="13" fill="#ddd" textLength="35" lengthAdjust="spacingAndGlyphs">Dismiss</text>
<path d="M572 797H1077V861.500H572" fill="none" stroke="#ddd" stroke-width="2"/>
<g font-size="15" fill="#e8e8e8" style="font-family:'Liberation Mono',monospace">
<text x="577" y="812" textLength="72" style="font-family:'Liberation Mono',monospace">PLATFORM</text><text x="677" y="812" textLength="45" style="font-family:'Liberation Mono',monospace">FIELD</text><text x="776" y="812" textLength="72" style="font-family:'Liberation Mono',monospace">ALTITUDE</text><text x="911" y="812" textLength="36" style="font-family:'Liberation Mono',monospace">TIME</text>
<text x="577" y="827" textLength="90" style="font-family:'Liberation Mono',monospace">rhb_lowprf</text><text x="677" y="827" textLength="45" style="font-family:'Liberation Mono',monospace">maxdz</text><text x="776" y="827" textLength="99" style="font-family:'Liberation Mono',monospace">0.50 km MSL</text><text x="911" y="827" textLength="162" style="font-family:'Liberation Mono',monospace">19-Aug-97,18:02:16</text>
<text x="577" y="842" textLength="54" style="font-family:'Liberation Mono',monospace">rhb_3d</text><text x="677" y="842" textLength="45" style="font-family:'Liberation Mono',monospace">maxdz</text><text x="776" y="842" textLength="99" style="font-family:'Liberation Mono',monospace">0.50 km MSL</text><text x="911" y="842" textLength="162" style="font-family:'Liberation Mono',monospace">19-Aug-97,17:52:30</text>
</g>

<!-- bottom control bar -->
<rect x="573" y="873" width="506" height="27" fill="#e5e5e5"/>
<rect x="573" y="873" width="6" height="27" fill="#5f9ea0"/>
<path d="M580 873V900M585 873V900M720 873V900M726.500 873V896.500H913V873M918 873V900M1018 873V900M1073 873V900" stroke="#000" stroke-width="2" fill="none"/>
<rect x="1074" y="873" width="5" height="27" fill="#5f9ea0"/>
<path d="M591.500 873V895.500H651V873" fill="none" stroke="#f00" stroke-width="1.200"/>
<text x="596" y="891" font-size="16" fill="#111" textLength="50" lengthAdjust="spacingAndGlyphs">Real Time</text>
<rect x="657" y="873" width="56" height="23" fill="#000"/><path d="M657 873V895.500H713V873" fill="none" stroke="#f00" stroke-width="1.500"/>
<text x="661" y="891" font-size="16" fill="#fff" textLength="48" lengthAdjust="spacingAndGlyphs">Set Time</text>
<text x="733" y="887" font-size="16" font-weight="bold" fill="#000" textLength="24" lengthAdjust="spacingAndGlyphs">Skip</text>
<path d="M765 873V891H802.500V873" fill="none" stroke="#ff0" stroke-width="2"/>
<text x="772" y="888" font-size="13" fill="#000" style="font-family:'Liberation Mono',monospace">1</text>
<path d="M772 892l3-3 3 3" fill="none" stroke="#000"/>
<path d="M805.500 873V893.500H856V873" fill="none" stroke="#000"/>
<rect x="812.500" y="877.500" width="8" height="11" fill="none" stroke="#000" stroke-width="1.300"/><path d="M814 881h5M814 883h5M814 885h5" stroke="#000"/>
<text x="826" y="889" font-size="15" font-weight="bold" fill="#000" style="font-family:'Liberation Serif',serif" textLength="26" lengthAdjust="spacing">hrs</text>
<rect x="860" y="873" width="23" height="20" fill="url(#chk)"/><path d="M860 873V893.500H883V873" fill="none" stroke="#f00" stroke-width="1.300"/>
<rect x="885" y="873" width="23" height="20" fill="url(#chk)"/><rect x="885" y="873" width="4" height="20" fill="#000"/><rect x="904" y="873" width="4" height="20" fill="#000"/><rect x="885" y="890" width="23" height="3" fill="#000"/><path d="M885 873V893.500H908V873" fill="none" stroke="#f00" stroke-width="1.300"/>
<rect x="866" y="877" width="11" height="10" fill="#e5e5e5"/><path d="M867 882l4-4v2.500h5v3h-5v2.500z" fill="#000"/>
<rect x="891" y="877" width="11" height="10" fill="#e5e5e5"/><path d="M901 882l-4-4v2.500h-5v3h5v2.500z" fill="#000"/>
<path d="M925.500 873V895.500H957V873M962.500 873V895.500H1011V873" fill="none" stroke="#f00" stroke-width="1.200"/>
<text x="929" y="891" font-size="16" fill="#111" textLength="24" lengthAdjust="spacingAndGlyphs">Help</text>
<text x="966" y="891" font-size="16" fill="#111" textLength="41" lengthAdjust="spacingAndGlyphs">Dismiss</text>
</svg>
</body></html>
